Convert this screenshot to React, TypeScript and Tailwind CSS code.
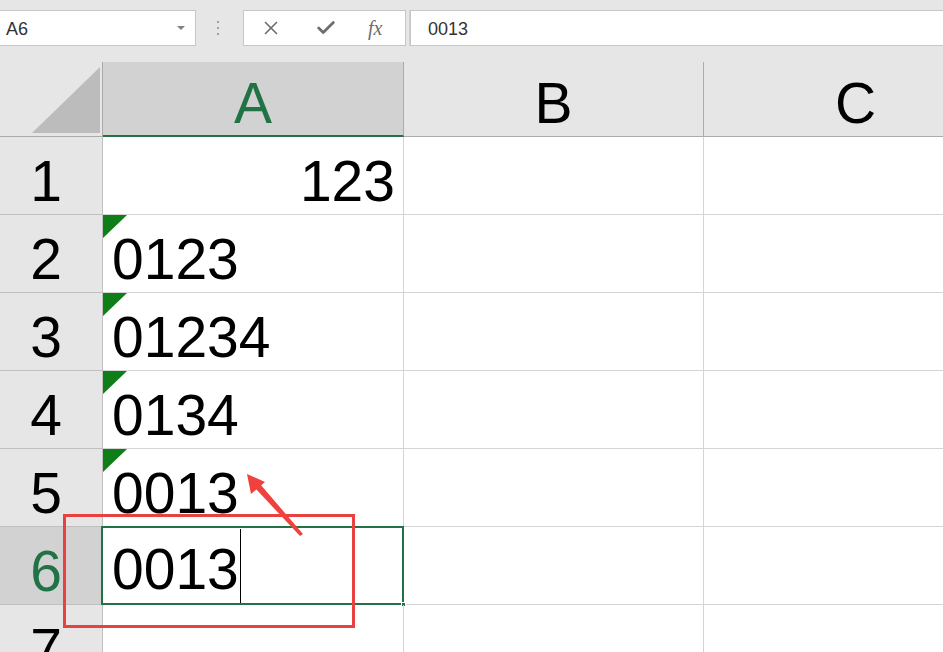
import { X, Check } from 'lucide-react'

type Row = {
	n: number
	value: string
	align?: 'left' | 'right'
	flag?: boolean
	active?: boolean
}

const rows: Row[] = [
	{ n: 1, value: '123', align: 'right' },
	{ n: 2, value: '0123', flag: true },
	{ n: 3, value: '01234', flag: true },
	{ n: 4, value: '0134', flag: true },
	{ n: 5, value: '0013', flag: true },
	{ n: 6, value: '0013', active: true },
	{ n: 7, value: '' },
]

const FormulaBar = () => (
	<div className="h-[62px] bg-[#e6e6e6] pt-[10px] flex items-start">
		<div className="w-[196px] h-[36px] bg-white border border-[#c6c6c6] border-l-0 flex items-center justify-between pl-[6px] pr-[10px]">
			<span className="text-[18px] text-[#333] mt-[2px]">A6</span>
			<span className="w-0 h-0 border-l-[4px] border-r-[4px] border-t-[4px] border-l-transparent border-r-transparent border-t-[#808080]" />
		</div>
		<div className="w-[47px] h-[36px] flex flex-col items-center justify-center gap-[4px] pr-[4px]">
			<span className="w-[2px] h-[2px] bg-[#a0a0a0]" />
			<span className="w-[2px] h-[2px] bg-[#a0a0a0]" />
			<span className="w-[2px] h-[2px] bg-[#a0a0a0]" />
		</div>
		<div className="w-[163px] h-[36px] bg-white border border-[#c6c6c6] flex items-center pl-[16px] gap-[33px] text-[#6e6e6e]">
			<X size={22} strokeWidth={1.8} />
			<Check size={22} strokeWidth={3} />
			<span className="text-[20px] italic leading-none font-['Liberation_Serif',serif] -ml-[2px]">
				fx
			</span>
		</div>
		<div className="w-[4px] h-[36px] border-r border-[#d0d0d0]" />
		<div className="flex-1 h-[36px] bg-white border border-[#c6c6c6] border-r-0 flex items-center pl-[17px]">
			<span className="text-[18px] text-[#333] mt-[2px]">0013</span>
		</div>
	</div>
)

const HeaderRow = () => (
	<div className="h-[75px] flex bg-[#e6e6e6]">
		<div className="w-[103px] border-r border-b border-[#ababab] flex items-end justify-end pr-[2px] pb-[3px]">
			<svg width="68" height="66" viewBox="0 0 68 66">
				<polygon points="68,0 68,66 0,66" fill="#bcbcbc" />
			</svg>
		</div>
		<div className="w-[301px] bg-[#d2d2d2] border-r border-[#ababab] border-b-2 border-b-[#217346] flex items-end justify-center pb-[3px]">
			<span className="text-[57px] leading-none text-[#217346]">A</span>
		</div>
		<div className="w-[300px] border-r border-b border-[#ababab] flex items-end justify-center pb-[4px]">
			<span className="text-[57px] leading-none text-black">B</span>
		</div>
		<div className="flex-1 border-b border-[#ababab] flex items-end justify-start pb-[4px] pl-[131px]">
			<span className="text-[57px] leading-none text-black">C</span>
		</div>
	</div>
)

const SheetRow = ({ row }: { row: Row }) => (
	<div className="h-[78px] flex shrink-0">
		<div
			className={`w-[103px] border-r border-b border-[#c0c0c0] flex items-end justify-center pb-[4px] pr-[10px] ${
				row.active ? 'bg-[#d2d2d2] text-[#217346]' : 'bg-[#e6e6e6] text-black'
			}`}
		>
			<span className="text-[57px] leading-none">{row.n}</span>
		</div>
		<div
			className={`relative w-[301px] border-r border-b border-[#d4d4d4] flex items-end pb-[4px] ${
				row.align === 'right' ? 'justify-end pr-[8px]' : 'justify-start pl-[9px]'
			}`}
		>
			{row.flag && (
				<svg className="absolute left-0 top-0" width="24" height="23" viewBox="0 0 24 23">
					<polygon points="0,0 24,0 0,23" fill="#0f7d18" />
				</svg>
			)}
			{row.active && (
				<>
					<div className="absolute -left-[2px] -top-[1px] right-[-1px] bottom-[-1px] border-2 border-[#217346]" />
					<div className="absolute right-[-3px] bottom-[-3px] w-[5px] h-[5px] bg-[#217346] border border-white" />
				</>
			)}
			<span className={`text-[57px] leading-none text-black ${row.active ? 'mb-[2px]' : ''}`}>
				{row.value}
			</span>
			{row.active && <span className="w-px h-[75px] bg-black mb-[-4px] ml-[1px]" />}
		</div>
		<div className="w-[300px] border-r border-b border-[#d4d4d4]" />
		<div className="flex-1 border-b border-[#d4d4d4]" />
	</div>
)

const Annotation = () => (
	<svg className="absolute left-0 top-0 pointer-events-none" width="943" height="652" viewBox="0 0 943 652">
		<rect x="64.5" y="515.5" width="289" height="111" fill="none" stroke="#e8413f" strokeWidth="3" />
		<polygon points="300,536 303,534 260,484 255,488" fill="#f0413e" />
		<polygon points="247,474 251,494 265,482" fill="#f0413e" />
	</svg>
)

export default function App() {
	return (
		<div className="relative w-[943px] h-[652px] overflow-hidden bg-white font-['Liberation_Sans',Arial,sans-serif]">
			<FormulaBar />
			<HeaderRow />
			{rows.map((row) => (
				<SheetRow key={row.n} row={row} />
			))}
			<Annotation />
		</div>
	)
}
